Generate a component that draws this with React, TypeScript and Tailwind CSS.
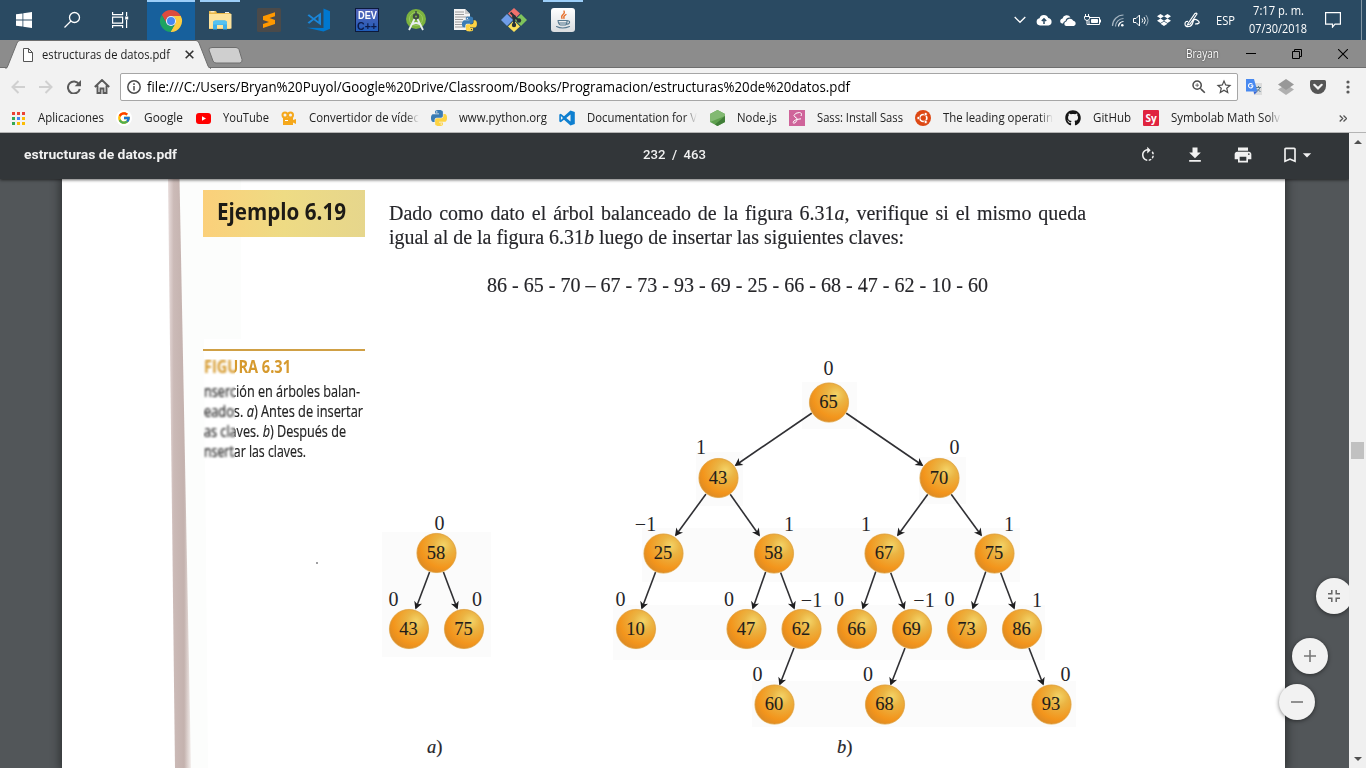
import { useLayoutEffect, useRef } from "react";
import type { ReactNode } from "react";
import { MdFileDownload, MdPrint, MdBookmarkBorder, MdRotateRight, MdStarBorder, MdZoomIn, MdArrowDropDown } from "react-icons/md";
import { FaDropbox, FaGithub } from "react-icons/fa";
import { FcGoogle } from "react-icons/fc";

/* Text squeezed or stretched horizontally to the width its class gives. */
function Fit({ className, children }: { className: string; children: ReactNode }) {
  const box = useRef<HTMLDivElement>(null);
  const text = useRef<HTMLSpanElement>(null);
  useLayoutEffect(() => {
    const b = box.current;
    const t = text.current;
    if (b && t && t.offsetWidth) t.style.transform = `scaleX(${b.clientWidth / t.getBoundingClientRect().width})`;
  }, []);
  return (
    <div ref={box} className={`shrink-0 whitespace-pre ${className}`}>
      <span ref={text} className="inline-block origin-left">{children}</span>
    </div>
  );
}

const LOBE =
  "M14.25.18l.9.2.73.26.59.3.45.32.34.34.25.34.16.33.1.3.04.26.02.2-.01.13V8.5l-.05.63-.13.55-.21.46-.26.38-.3.31-.33.25-.35.19-.35.14-.33.1-.3.07-.26.04-.21.02H8.77l-.69.05-.59.14-.5.22-.41.27-.33.32-.27.35-.2.36-.15.37-.1.35-.07.32-.04.27-.02.21v3.06H3.17l-.21-.03-.28-.07-.32-.12-.35-.18-.36-.26-.36-.36-.35-.46-.32-.59-.28-.73-.21-.88-.14-1.05-.05-1.23.06-1.22.16-1.04.24-.87.32-.71.36-.57.4-.44.42-.33.42-.24.4-.16.36-.1.32-.05.24-.01h.16l.06.01h8.16v-.83H6.18l-.01-2.75-.02-.37.05-.34.11-.31.17-.28.25-.26.31-.23.38-.2.44-.18.51-.15.58-.12.64-.1.71-.06.77-.04.84-.02 1.27.05zm-6.3 1.98l-.23.33-.08.41.08.41.23.34.33.22.41.09.41-.09.33-.22.23-.34.08-.41-.08-.41-.23-.33-.33-.22-.41-.09-.41.09z";

function Python({ size }: { size: number }) {
  return (
    <svg width={size} height={size} viewBox="0 0 24 24">
      <path d={LOBE} fill="#3b7cb4" />
      <path d={LOBE} fill="#fdd343" transform="rotate(180 12 12)" />
    </svg>
  );
}

function Chrome() {
  const arm = "M12 7H21.8A11 11 0 0 0 2.77 6.01L7.67 14.5A5 5 0 0 1 12 7Z";
  return (
    <svg width="24" height="24" viewBox="0 0 24 24">
      <path d={arm} fill="#dd4b3e" />
      <path d={arm} fill="#fdcd40" transform="rotate(120 12 12)" />
      <path d={arm} fill="#1da362" transform="rotate(240 12 12)" />
      <circle cx="12" cy="12" r="5.1" fill="#f1f1f1" />
      <circle cx="12" cy="12" r="4" fill="#4688f4" />
    </svg>
  );
}

function Folder() {
  return (
    <svg width="24" height="24" viewBox="0 0 24 24">
      <path d="M1 4.5V3h7l1 2h13.5v16H1z" fill="#e9b84a" />
      <path d="M2.5 3.8h4M17 4.6h4" stroke="#fff" />
      <path d="M1 6h22.5v14.5H1z" fill="#fde39c" />
      <path d="M5 21.5V15q0-2.5 2.5-2.5h9Q19 12.500 19 15v6.500h-4V17H9v4.500z" fill="#3fb0e8" />
      <path d="M5 16.500h14V15q0-2.500-2.500-2.500h-9Q5 12.500 5 15z" fill="#55c2f0" />
    </svg>
  );
}

function Sublime() {
  return (
    <svg width="24" height="24" viewBox="0 0 24 24">
      <rect width="24" height="24" rx="1.500" fill="#4a4a4a" />
      <path d="M6 8.200 18 4.200v4L12.500 10 18 12v4L6 20v-4l6-2-6-2z" fill="#ff9800" />
    </svg>
  );
}

/* Thick right slab with a thinner crossed ribbon to its left. */
function Code() {
  return (
    <svg width="24" height="24" viewBox="0 0 24 24">
      <path d="M17.500.500 24 3.300v17.400l-6.500 2.800L.800 19.800 17.500 20z" fill="#0078cf" />
      <path d="M15 4.500v13L1.500 7.500 3 6.200l9.500 7.300V8.200L3.200 15.800 1.500 14.500z" fill="#1a86d9" />
    </svg>
  );
}

function CodeSmall() {
  return (
    <svg width="16" height="16" viewBox="0 0 16 16">
      <path d="M11.500.400 15.800 2v12l-4.300 1.600L5 9.700 1.800 12.200.300 11.400V4.600l1.500-.8L5 6.300zM11.500 4.600 7.300 8l4.200 3.400zM1.900 6v4L4 8z" fill="#0e7fd0" fillRule="evenodd" />
    </svg>
  );
}

function DevCpp() {
  return (
    <div className="flex h-6 w-6 flex-col items-center border border-[#0d1a3c] bg-linear-to-b from-[#5264b8] to-[#1f5cb8] font-['Liberation_Sans'] font-bold">
      <Fit className="mt-[2px] w-[19px] text-[10px] leading-[10px] text-white">DEV</Fit>
      <Fit className="w-[20px] text-[11px] leading-[10px] text-[#0c1a48]">C++</Fit>
    </div>
  );
}

function AndroidStudio() {
  return (
    <svg width="24" height="24" viewBox="0 0 24 24">
      <circle cx="12" cy="11" r="10" fill="#7cb33f" />
      <circle cx="12" cy="11" r="6.500" fill="none" stroke="#9ccb62" strokeWidth="1" />
      <circle cx="12" cy="8.500" r="3.200" fill="#3d4b45" />
      <path d="M10.500 11 5 22M13.500 11 19 22M7 17q5-4 10 0" stroke="#e8eef0" strokeWidth="1.800" fill="none" />
      <path d="M12 3v4" stroke="#3d4b45" strokeWidth="1.500" />
      <circle cx="12" cy="8.500" r="1.100" fill="#7cb33f" />
    </svg>
  );
}

function PythonFile() {
  return (
    <svg width="24" height="24" viewBox="0 0 24 24">
      <path d="M1 1h11l5 5v16H1z" fill="#f3f3f3" />
      <path d="M2 4h9M2 6.500h9M2 9h13M2 11.500h8M2 14h7M2 16.500h7M2 19h8" stroke="#9b9b9b" />
      <path d="M12 1v5h5" fill="#c9c9c9" />
      <g transform="translate(9 8.500) scale(.62)">
        <path d={LOBE} fill="#3b7cb4" />
        <path d={LOBE} fill="#fdd343" transform="rotate(180 12 12)" />
      </g>
    </svg>
  );
}

function GitIcon() {
  return (
    <svg width="26" height="24" viewBox="0 0 26 24">
      <path d="m13 0 6 5.500-6 6-6-6z" fill="#f0716c" />
      <path d="m20 6 6 6-6 6-6-6z" fill="#7fc45c" />
      <path d="m6 6 6 6-6 6-6-6z" fill="#6f9de8" />
      <path d="m13 12.500 6 6-6 5.500-6-5.500z" fill="#fbe05a" />
      <path d="M9.500 4.500 13 8v9M13 8.500l5 4" stroke="#25323a" strokeWidth="2" fill="none" />
      <circle cx="13" cy="17" r="2.200" fill="#25323a" />
      <circle cx="18" cy="12.500" r="2.200" fill="#25323a" />
      <circle cx="13" cy="9" r="2" fill="#25323a" />
    </svg>
  );
}

function TaskCell({ children, open, active }: { children: ReactNode; open?: boolean; active?: boolean }) {
  return (
    <div className="flex h-10 w-[49px] flex-col items-center pr-px">
      {active ? (
        <div className="flex h-10 w-12 items-center justify-center self-start border-t-2 border-[#9ccef8] bg-[#17609c]">{children}</div>
      ) : (
        <>
          <div className={open ? "h-0.5 w-10 bg-[#9ccef8]" : "h-0.5 w-10"} />
          <div className="flex h-[36px] items-center">{children}</div>
        </>
      )}
    </div>
  );
}

function Taskbar() {
  return (
    <div className="flex h-10 w-full shrink-0 bg-[#2a4a62] text-white">
      <div className="flex w-12 items-center justify-center">
        <svg width="16" height="16" viewBox="0 0 16 16" fill="#fff">
          <path d="M0 2.300 6.500 1.400v6.100H0zM7.300 1.200 16 0v7.500H7.300zM0 8.500h6.500v6.100L0 13.700zM7.300 8.500H16V16l-8.700-1.200z" />
        </svg>
      </div>
      <div className="flex w-12 items-center justify-center">
        <svg width="18" height="18" viewBox="0 0 18 18" fill="none" stroke="#fff" strokeWidth="1.300">
          <circle cx="11.500" cy="6.500" r="5" />
          <path d="m8 10-6.500 6.500" />
        </svg>
      </div>
      <div className="flex w-[51px] items-center pl-4">
        <svg width="17" height="16" viewBox="0 0 17 16" fill="none" stroke="#fff" strokeWidth="1.200">
          <path d="M.600 0v2.600h10V0M.600 16v-2.400h10V16M.600 5.100h10v6H.600zM14.600 0v4M14.600 8v8" />
          <path d="M13.200 4.500h3v3h-3z" fill="#fff" stroke="none" />
        </svg>
      </div>
      <TaskCell active><Chrome /></TaskCell>
      <TaskCell open><Folder /></TaskCell>
      <TaskCell><Sublime /></TaskCell>
      <TaskCell><Code /></TaskCell>
      <TaskCell><DevCpp /></TaskCell>
      <TaskCell><AndroidStudio /></TaskCell>
      <TaskCell><PythonFile /></TaskCell>
      <TaskCell><GitIcon /></TaskCell>
      <TaskCell open>
        <div className="flex h-6 w-6 items-center justify-center rounded-[3px] bg-linear-to-b from-white to-[#d9dde0]">
          <svg width="16" height="20" viewBox="0 0 16 20" fill="none" strokeLinecap="round">
            <path d="M9 1q1 2-1 3.500T7 8.500M11 4.500q-3 1.500-2 4" stroke="#e76f2b" strokeWidth="1.300" />
            <path d="M3 10.500h9q0 4-1.500 4.500h-5Q3.500 14.500 3 10.500M12 11q3-.500 2.500 1.500T11.500 14M1.500 16.500q6 3 13 0M4 13h7" stroke="#55788f" strokeWidth="1.100" />
          </svg>
        </div>
      </TaskCell>
      <div className="flex flex-1 items-center justify-end">
        <svg className="mr-[10px]" width="12" height="8" viewBox="0 0 12 8" fill="none" stroke="#fff" strokeWidth="1.300"><path d="m.700 1 5.300 5.300L11.300 1" /></svg>
        <svg className="mr-2" width="16" height="12" viewBox="0 0 16 12"><path d="M4 11.500a3.700 3.700 0 0 1-.500-7.300A4.700 4.700 0 0 1 12.300 4 3.800 3.800 0 0 1 12.500 11.500z" fill="#fff" /><path d="M8 10V5M5.800 7 8 4.800 10.200 7" stroke="#2a4a62" strokeWidth="1.500" fill="none" /></svg>
        <svg className="mr-[7px]" width="17" height="11" viewBox="0 0 17 11"><path d="M3 8.500H2A2.500 2.500 0 0 1 2.500 3.600 4.300 4.300 0 0 1 10.500 2.500Q6 2 5.500 6 3.500 6.300 3 8.500z" fill="#fff" /><path d="M6 11a2.300 2.300 0 0 1 .3-4.500 3.800 3.800 0 0 1 7-.7A2.700 2.700 0 0 1 14 11z" fill="#fff" /></svg>
        <svg className="mr-[10px]" width="17" height="12" viewBox="0 0 17 12" fill="none" stroke="#fff"><path d="M1.500 0v2M4.500 0v2M.500 2.500h5v2q-.500 2-2.500 2T.500 4.500zM3 6.500v4h2M6 3.500h9.500v7H5V6.500" /><path d="M7.500 5.500h6v3h-6z" fill="#fff" /><path d="M16.500 5.500v3" /></svg>
        <svg className="mr-2" width="14" height="13" viewBox="0 0 14 13" fill="none" strokeWidth="1.200"><path d="M1.500 12A11 11 0 0 1 12.500 1M4.500 12.500a8 8 0 0 1 8-8" stroke="#a4b4c0" /><path d="M7.500 12.500a5 5 0 0 1 5-5" stroke="#fff" /><circle cx="11.300" cy="11.300" r="1.300" fill="#fff" /></svg>
        <svg className="mr-[7px]" width="17" height="13" viewBox="0 0 17 13" fill="none" stroke="#fff"><path d="M.500 4.500H3L6.500 1v11L3 8.500H.500zM9 4.500q1.500 2 0 4M11 3q2.700 3.500 0 7" /><path d="M13 1.200q4 5.300 0 10.600" stroke="#a4b4c0" /></svg>
        <FaDropbox className="mr-[13px] h-[14px] w-[14px]" />
        <svg width="17" height="16" viewBox="0 0 17 16" fill="none" stroke="#fff" strokeWidth="1.200"><path d="M4 9.500Q1 9 1 12t4 2.500q3-.500 4-4.500t4-2 2 3-4 1M4 11.500 11 1.500q1.500-1 2 .500L6 12l-2.500 1z" /></svg>
        <Fit className="ml-[15px] w-[19px] font-['Open_Sans'] text-[13px] leading-4">ESP</Fit>
        <div className="ml-[14px] flex flex-col items-center font-['Open_Sans'] text-[12.500px] leading-[18px]">
          <Fit className="w-[51px]">7:17 p. m.</Fit>
          <Fit className="w-[58px]">07/30/2018</Fit>
        </div>
        <svg className="ml-[18px]" width="16" height="16" viewBox="0 0 16 16" fill="none" stroke="#fff" strokeWidth="1.200"><path d="M.600.600h14.800v11.500H10l-2.500 3v-3H.600z" /></svg>
        <div className="mr-1 ml-5 h-10 w-px bg-[#8396a3]" />
      </div>
    </div>
  );
}

function TabStrip() {
  return (
    <div className="relative flex h-7 shrink-0 items-center border-b border-[#6e6e6e] bg-[#8c8c8c]">
      <svg className="absolute top-0 left-0" width="260" height="29" viewBox="0 0 260 29">
        <path d="M5.500 28.500q1.500 0 2.300-2.500L17 3q1-2.500 3-2.500h176q2 0 3 2.500l9 23q1 2.500 3 2.500" fill="#f2f2f2" stroke="#6e6e6e" />
        <path d="M7 28.500h203" stroke="#f2f2f2" strokeWidth="1" />
        <path d="M212 7.500h24q2 0 3 2l3 10q.5 3-2 3.500h-24q-2 0-3-2l-4-11q-.5-2.500 3-2.500z" fill="#cfcfcf" stroke="#6e6e6e" />
      </svg>
      <div className="relative flex w-[194px] items-center pt-0.5 pl-[23px]">
        <svg width="10" height="14" viewBox="0 0 10 14" fill="#fff" stroke="#555"><path d="M.500.500h5l4 4v9h-9zM5.500.500v4h4" /></svg>
        <Fit className="ml-[9px] w-[128px] font-['Open_Sans'] text-[12.500px] leading-4 text-[#1c1c1c]">estructuras de datos.pdf</Fit>
        <svg className="ml-[15px]" width="9" height="9" viewBox="0 0 9 9" stroke="#333" strokeWidth="1.600"><path d="m.700.700 7.600 7.600M8.300.700.700 8.300" /></svg>
      </div>
      <div className="flex flex-1 items-center justify-end">
        <Fit className="w-[33px] font-['Open_Sans'] text-[12px] leading-4 text-white [text-shadow:0_0_2px_#222]">Brayan</Fit>
        <div className="ml-[27px] h-px w-[10px] bg-black" />
        <svg className="ml-9" width="10" height="10" viewBox="0 0 10 10" fill="none" stroke="#000"><path d="M.500 2.500h7v7h-7zM2.500 2.500v-2h7v7h-2" /></svg>
        <svg className="mr-[18px] ml-9" width="10" height="10" viewBox="0 0 10 10" stroke="#000" strokeWidth="1.100"><path d="m0 0 10 10M10 0 0 10" /></svg>
      </div>
    </div>
  );
}

function Toolbar() {
  return (
    <div className="flex h-[37px] shrink-0 items-center bg-[#f2f2f2]">
      <svg className="ml-[11px]" width="14" height="14" viewBox="0 0 14 14" fill="none" stroke="#d0d0d0" strokeWidth="2"><path d="M14 7H1.500M7.500 1l-6 6 6 6" /></svg>
      <svg className="ml-[14px]" width="14" height="14" viewBox="0 0 14 14" fill="none" stroke="#d0d0d0" strokeWidth="2"><path d="M0 7h12.500M6.500 1l6 6-6 6" /></svg>
      <svg className="ml-[14px]" width="14" height="14" viewBox="0 0 14 14"><path d="M12 4.200A6 6 0 1 0 12.800 9" fill="none" stroke="#5a5a5a" strokeWidth="2" /><path d="M14 0v6.300H7.700z" fill="#5a5a5a" /></svg>
      <svg className="ml-[13px]" width="16" height="15" viewBox="0 0 16 15" fill="none" stroke="#5a5a5a" strokeWidth="1.900"><path d="m.800 8 7.200-7 7.200 7M3.500 6.500V14h3V9.500h3V14h3V6.500" /></svg>
      <div className="ml-[10px] flex h-7 w-[1118px] items-center rounded-[2px] border border-[#a6a6a6] bg-white pl-[6px]">
        <svg width="14" height="14" viewBox="0 0 14 14" fill="none" stroke="#4c4c4c" strokeWidth="1.500"><circle cx="7" cy="7" r="6.200" /><path d="M7 6v4.500M7 3.300v1.600" /></svg>
        <Fit className="ml-[6px] w-[703px] font-['Open_Sans'] text-[14px] leading-5 text-black">file:///C:/Users/Bryan%20Puyol/Google%20Drive/Classroom/Books/Programacion/estructuras%20de%20datos.pdf</Fit>
        <MdZoomIn className="ml-[340px] h-[18px] w-[18px] text-[#4c4c4c]" />
        <MdStarBorder className="ml-[7px] h-[18px] w-[18px] text-[#4c4c4c]" />
      </div>
      <svg className="ml-2" width="16" height="16" viewBox="0 0 16 16"><path d="M6 4h10v12H8z" fill="#dcdcdc" /><path d="M0 0h8l3.500 12.500H0z" fill="#4889f0" /><path d="M8.500 15.500 7.500 12.500h4z" fill="#3867d6" /><path d="M6.500 5.500a2.200 2.200 0 1 0 .4 1.300H4.800" stroke="#fff" strokeWidth="1.100" fill="none" /><path d="M10 8.500h5M12.500 7v1.500M14 8.500q-1 3-3.500 4M11.500 10l3 3" stroke="#5e7c8c" fill="none" /></svg>
      <svg className="ml-4" width="16" height="16" viewBox="0 0 16 16"><path d="m8 5.500 8 5-8 5.500-8-5.500z" fill="#b0b0b0" /><path d="m8 0 8 5.500L8 11 0 5.500z" fill="#989898" /></svg>
      <svg className="ml-4" width="16" height="14" viewBox="0 0 16 14"><path d="M1.500 0h13Q16 0 16 1.500V6a8 8 0 0 1-16 0V1.500Q0 0 1.500 0z" fill="#555" /><path d="m4.300 4.800 3.700 3.600 3.700-3.600" fill="none" stroke="#f2f2f2" strokeWidth="2.200" strokeLinecap="round" /></svg>
      <svg className="ml-[20px]" width="4" height="14" viewBox="0 0 4 14" fill="#5a5a5a"><circle cx="2" cy="2" r="1.600" /><circle cx="2" cy="7" r="1.600" /><circle cx="2" cy="12" r="1.600" /></svg>
    </div>
  );
}

function Mark({ icon, children }: { icon: ReactNode; children: ReactNode }) {
  return (
    <div className="flex items-center gap-3">
      <div className="flex w-4 justify-center">{icon}</div>
      {children}
    </div>
  );
}

const FADE = "overflow-hidden [mask-image:linear-gradient(to_right,#000_88%,transparent)]";

function Bookmarks() {
  const dots = ["#ea4335", "#ea4335", "#ea4335", "#34a853", "#4285f4", "#fbbc05", "#34a853", "#fbbc05", "#fbbc05"];
  return (
    <div className="flex h-[27px] shrink-0 items-center border-b border-[#b4b4b4] bg-[#f2f2f2] pb-0.5 pl-[10px] font-['Open_Sans'] text-[12.500px] leading-4 text-[#222]">
      <div className="flex flex-1 items-center gap-[12px]">
        <Mark icon={<svg width="13" height="13" viewBox="0 0 13 13">{dots.map((c, i) => <rect key={i} x={(i % 3) * 5} y={Math.floor(i / 3) * 5} width="3" height="3" fill={c} />)}</svg>}>
          <Fit className="w-[66px]">Aplicaciones</Fit>
        </Mark>
        <Mark icon={<div className="rounded-full bg-white p-px"><FcGoogle className="h-[14px] w-[14px]" /></div>}><Fit className="w-[39px]">Google</Fit></Mark>
        <Mark icon={<svg width="15" height="11" viewBox="0 0 15 11"><rect width="15" height="11" rx="3" fill="#f00" /><path d="m6 3.200 4 2.300-4 2.300z" fill="#fff" /></svg>}><Fit className="w-[46px]">YouTube</Fit></Mark>
        <Mark icon={<svg width="16" height="15" viewBox="0 0 16 15" fill="none" stroke="#f5a81c" strokeWidth="2"><circle cx="4" cy="4" r="2.500" /><circle cx="9.500" cy="4" r="2.500" /><path d="M2 7h10v2l3-1v5l-3-1.500V14H2z" fill="#f5a81c" stroke="none" /><path d="M4 9.500h3" stroke="#fff" strokeWidth="1" /></svg>}>
          <div className={`w-[110px] ${FADE}`}><Fit className="w-[110px]">Convertidor de vídec</Fit></div>
        </Mark>
        <Mark icon={<Python size={16} />}><Fit className="w-[88px]">www.python.org</Fit></Mark>
        <Mark icon={<CodeSmall />}><div className={`w-[110px] ${FADE}`}><Fit className="w-[110px]">Documentation for V</Fit></div></Mark>
        <Mark icon={<svg width="15" height="16" viewBox="0 0 15 16"><path d="M7.500 0 15 4v8l-7.500 4L0 12V4z" fill="#5fa04e" /><path d="M7.500 0 15 4v2L0 12V4z" fill="#82b972" /><path d="M15 6v6l-7.500 4L5 14.500z" fill="#417e38" /></svg>}><Fit className="w-[40px]">Node.js</Fit></Mark>
        <Mark icon={<div className="flex h-4 w-4 items-center justify-center bg-[#cf649a] text-white"><svg width="14" height="14" viewBox="0 0 14 14" fill="none" stroke="#fff"><path d="M11 5Q12.500 2 9.500 1.500 5 1.500 4 4.500 4.500 6 7 7.500 7.500 9 5.500 11.500 3.500 13 3 11.500 3.500 9.500 6.500 8.500L11 7.800" /></svg></div>}><Fit className="w-[86px]">Sass: Install Sass</Fit></Mark>
        <Mark icon={<svg width="16" height="16" viewBox="0 0 16 16"><circle cx="8" cy="8" r="8" fill="#dd4814" /><circle cx="8.300" cy="8" r="3.500" fill="none" stroke="#fff" strokeWidth="1.700" /><g fill="#fff" stroke="#dd4814" strokeWidth=".700"><circle cx="3.400" cy="8" r="1.600" /><circle cx="10.700" cy="4" r="1.600" /><circle cx="10.700" cy="12" r="1.600" /></g></svg>}><div className={`w-[110px] ${FADE}`}><Fit className="w-[110px]">The leading operatin</Fit></div></Mark>
        <Mark icon={<FaGithub className="h-4 w-4 text-[#161616]" />}><Fit className="w-[38px]">GitHub</Fit></Mark>
        <Mark icon={<div className="flex h-4 w-4 items-center justify-center rounded-[1px] bg-[#e0243f] text-[10px] leading-3 font-bold text-white">Sy</div>}><div className={`w-[110px] ${FADE}`}><Fit className="w-[109px]">Symbolab Math Solv</Fit></div></Mark>
      </div>
      <svg className="mr-[19px]" width="8" height="7" viewBox="0 0 8 7" fill="none" stroke="#555" strokeWidth="1.300"><path d="m.700.500 3 3-3 3M4.500.500l3 3-3 3" /></svg>
    </div>
  );
}

type Node = { x: number; y: number; n: number; label: string; lx: number; ly: number };
const NODES: Node[] = [
  { x: 436.5, y: 553, n: 58, label: "0", lx: 439.5, ly: 523 },
  { x: 409, y: 629, n: 43, label: "0", lx: 393.5, ly: 599 },
  { x: 464, y: 629, n: 75, label: "0", lx: 477, ly: 599 },
  { x: 829, y: 402.500, n: 65, label: "0", lx: 828.5, ly: 368 },
  { x: 718.500, y: 478, n: 43, label: "1", lx: 701, ly: 447 },
  { x: 939.500, y: 478, n: 70, label: "0", lx: 954.5, ly: 447 },
  { x: 663.500, y: 553.500, n: 25, label: "−1", lx: 645.500, ly: 524 },
  { x: 774, y: 553.500, n: 58, label: "1", lx: 789, ly: 524 },
  { x: 884.500, y: 553.500, n: 67, label: "1", lx: 866, ly: 524 },
  { x: 994.500, y: 553.500, n: 75, label: "1", lx: 1009, ly: 524 },
  { x: 636, y: 629, n: 10, label: "0", lx: 620.5, ly: 599.500 },
  { x: 746.500, y: 629, n: 47, label: "0", lx: 729, ly: 599.500 },
  { x: 801.500, y: 629, n: 62, label: "−1", lx: 811.500, ly: 600 },
  { x: 857, y: 629, n: 66, label: "0", lx: 839, ly: 599.500 },
  { x: 912, y: 629, n: 69, label: "−1", lx: 924, ly: 600 },
  { x: 967, y: 629, n: 73, label: "0", lx: 949.5, ly: 599.500 },
  { x: 1022, y: 629, n: 86, label: "1", lx: 1037, ly: 600 },
  { x: 774.5, y: 704.500, n: 60, label: "0", lx: 757.5, ly: 674 },
  { x: 885, y: 704.500, n: 68, label: "0", lx: 868, ly: 674 },
  { x: 1051.500, y: 704.500, n: 93, label: "0", lx: 1065.5, ly: 674 },
];
const EDGES: number[][] = [
  [430, 571, 416, 608], [443, 571, 457, 608],
  [812, 413, 736, 465], [846, 413, 922, 465],
  [706, 494, 676, 535], [730, 494, 759, 535], [928, 494, 898, 535], [951, 494, 981, 535],
  [656, 571, 642, 608], [766, 571, 753, 608], [780, 571, 794, 608], [876, 571, 863, 608], [890, 571, 904, 608],
  [986, 571, 973, 608], [1000, 571, 1014, 608],
  [794, 648, 780, 684], [905, 648, 891, 684], [1029, 648, 1043, 684],
];
const HALOS: number[][] = [
  [382, 532, 109, 125], [802, 382, 55, 47], [696, 452, 47, 54], [919, 457, 47, 47],
  [642, 528, 378, 54], [613, 605, 432, 55], [752, 681, 324, 46],
];

function Trees() {
  return (
    <svg className="absolute inset-0" width="1223" height="589" viewBox="62 179 1223 589" fontFamily="'Liberation Serif', serif" fontSize="20" fill="#26262a">
      <defs>
        <radialGradient id="ball" cx=".68" cy=".3" r=".78">
          <stop offset="0" stopColor="#f4d468" />
          <stop offset=".3" stopColor="#ebb443" />
          <stop offset=".75" stopColor="#f3951c" />
          <stop offset="1" stopColor="#dc8a24" />
        </radialGradient>
        <marker id="tip" viewBox="0 0 8 8" refX="6.500" refY="4" markerWidth="9" markerHeight="9" markerUnits="userSpaceOnUse" orient="auto">
          <path d="M1 .300 8 4 1 7.700 3 4z" fill="#1e1e20" />
        </marker>
      </defs>
      {HALOS.map(([x, y, w, h]) => <rect key={`${x}-${y}`} x={x} y={y} width={w} height={h} fill="#fbfbfb" />)}
      {EDGES.map(([a, b, c, d], i) => <path key={i} d={`M${a} ${b}L${c} ${d}`} stroke="#303034" strokeWidth="1.600" markerEnd="url(#tip)" />)}
      {NODES.map((k, i) => (
        <g key={i} textAnchor="middle">
          <circle cx={k.x} cy={k.y} r="20.300" fill="#fbeccb" />
          <circle cx={k.x} cy={k.y} r="19.500" fill="url(#ball)" stroke="#d99a3c" strokeWidth=".700" />
          <text x={k.x - 0.500} y={k.y + 5.500} fontSize="18.500" fill="#1f1d1a" stroke="#1f1d1a" strokeWidth=".1">{k.n}</text>
          <text x={k.lx} y={k.ly + 6.500}>{k.label}</text>
        </g>
      ))}
      <text x="427" y="753" fontSize="18.500" stroke="#26262a" strokeWidth=".2"><tspan fontStyle="italic">a</tspan>)</text>
      <text x="837" y="753" fontSize="18.500" stroke="#26262a" strokeWidth=".2"><tspan fontStyle="italic">b</tspan>)</text>
      <circle cx="317" cy="563" r=".800" />
    </svg>
  );
}

function Page() {
  return (
    <div className="relative flex h-[589px] w-[1223px] shrink-0 overflow-hidden bg-white shadow-[0_0_9px_2px_rgba(0,0,0,.45)]">
      <svg className="absolute inset-0" width="200" height="589" viewBox="62 179 200 589">
        <defs>
          <linearGradient id="spine">
            <stop offset="0" stopColor="#e9dedd" /><stop offset=".25" stopColor="#cbbab7" />
            <stop offset=".7" stopColor="#c4b2ae" /><stop offset="1" stopColor="#f3eeec" />
          </linearGradient>
        </defs>
        <path d="M179 179h62v160H204l4 429h-20z" fill="#fcfdfc" />
        <path d="M168 179h11.500l11.500 589h-16z" fill="url(#spine)" />
      </svg>
      <Trees />
      <div className="relative flex w-[327px] shrink-0 flex-col pt-[11px] pl-[141px]">
        <div className="flex h-[47px] w-[162px] items-center bg-linear-to-r from-[#fbd07a] via-[#eedb84] to-[#e6d68c] pl-[14px]">
          <Fit className="mb-[6px] w-[129px] font-['Open_Sans'] text-[24px] leading-7 font-bold text-[#1d1b16]">Ejemplo 6.19</Fit>
        </div>
        <div className="relative mt-[112px] w-[162px] border-t-2 border-[#d0a045] pt-[6px] pl-px font-['Open_Sans'] text-[16px] leading-5 text-[#222]">
          <Fit className="mb-1 w-[87px] text-[17px] font-bold text-[#d69a2e]">FIGURA 6.31</Fit>
          <Fit className="w-[156px] [-webkit-text-stroke:0.2px_#222]">nserción en árboles balan-</Fit>
          <Fit className="w-[159px] [-webkit-text-stroke:0.2px_#222]">eados. <i>a</i>) Antes de insertar</Fit>
          <Fit className="w-[142px] [-webkit-text-stroke:0.2px_#222]">as claves. <i>b</i>) Después de</Fit>
          <Fit className="w-[102px] [-webkit-text-stroke:0.2px_#222]">nsertar las claves.</Fit>
          <div className="absolute top-[8px] left-0 h-[102px] w-[32px] backdrop-blur-[1px]" />
        </div>
      </div>
      <div className="relative flex flex-col pt-[22px] font-['Liberation_Serif'] text-[20.500px] leading-6 text-[#26262a] [-webkit-text-stroke:0.15px_#26262a]">
        <Fit className="w-[697px] [word-spacing:2px]">Dado como dato el árbol balanceado de la figura 6.31<i>a</i>, verifique si el mismo queda</Fit>
        <Fit className="w-[515px]">igual al de la figura 6.31<i>b</i> luego de insertar las siguientes claves:</Fit>
        <Fit className="mt-6 ml-[98px] w-[501px]">86 - 65 - 70 – 67 - 73 - 93 - 69 - 25 - 66 - 68 - 47 - 62 - 10 - 60</Fit>
      </div>
    </div>
  );
}

const ROUND = "absolute flex h-9 w-9 items-center justify-center rounded-full bg-[#f2f2f2] shadow-[0_1px_4px_rgba(0,0,0,.5)]";

function Viewer() {
  return (
    <div className="relative flex w-[1349px] flex-col overflow-hidden bg-[#525659]">
      <div className="relative z-10 flex h-[46px] shrink-0 items-center bg-[#323639] pb-0.5 font-['Roboto'] text-[13px] leading-4 font-bold text-[#f1f1f1] shadow-[0_1px_3px_rgba(0,0,0,.6)]">
        <Fit className="ml-6 w-[153px]">estructuras de datos.pdf</Fit>
        <Fit className="ml-[466px] w-[63px] font-medium">232  /  463</Fit>
        <MdRotateRight className="ml-[433px] h-[18px] w-[18px]" />
        <MdFileDownload className="ml-[28px] h-5 w-5" />
        <MdPrint className="ml-[28px] h-5 w-5" />
        <MdBookmarkBorder className="ml-[27px] h-5 w-5" />
        <MdArrowDropDown className="-ml-[3px] h-5 w-5" />
      </div>
      <div className="flex pl-[62px]"><Page /></div>
      <div className={`${ROUND} top-[445px] left-[1316px]`}>
        <svg width="12" height="12" viewBox="0 0 12 12" fill="none" stroke="#666" strokeWidth="1.500"><path d="M0 3.800h3.800V0M8.200 0v3.800H12M0 8.200h3.800V12M12 8.200H8.200V12" /></svg>
      </div>
      <div className={`${ROUND} top-[505px] left-[1292px]`}>
        <svg width="12" height="12" viewBox="0 0 12 12" stroke="#777" strokeWidth="1.600"><path d="M0 6h12M6 0v12" /></svg>
      </div>
      <div className={`${ROUND} top-[551px] left-[1279px]`}>
        <svg width="12" height="12" viewBox="0 0 12 12" stroke="#777" strokeWidth="1.600"><path d="M0 6h12" /></svg>
      </div>
    </div>
  );
}

export default function App() {
  return (
    <div className="flex h-[768px] w-[1366px] flex-col overflow-hidden">
      <Taskbar />
      <TabStrip />
      <Toolbar />
      <div className="h-px shrink-0 bg-[#f2f2f2]" />
      <Bookmarks />
      <div className="flex h-[635px]">
        <Viewer />
        <div className="flex w-[17px] flex-col items-center bg-[#f0f0f0] pt-[7px] pb-[7px]">
          <svg width="8" height="4" viewBox="0 0 8 4" fill="#505050"><path d="m4 0 4 4H0z" /></svg>
          <div className="mt-[298px] mb-auto h-[17px] w-[13px] bg-[#c1c1c1]" />
          <svg width="8" height="4" viewBox="0 0 8 4" fill="#505050"><path d="m4 4 4-4H0z" /></svg>
        </div>
      </div>
    </div>
  );
}
